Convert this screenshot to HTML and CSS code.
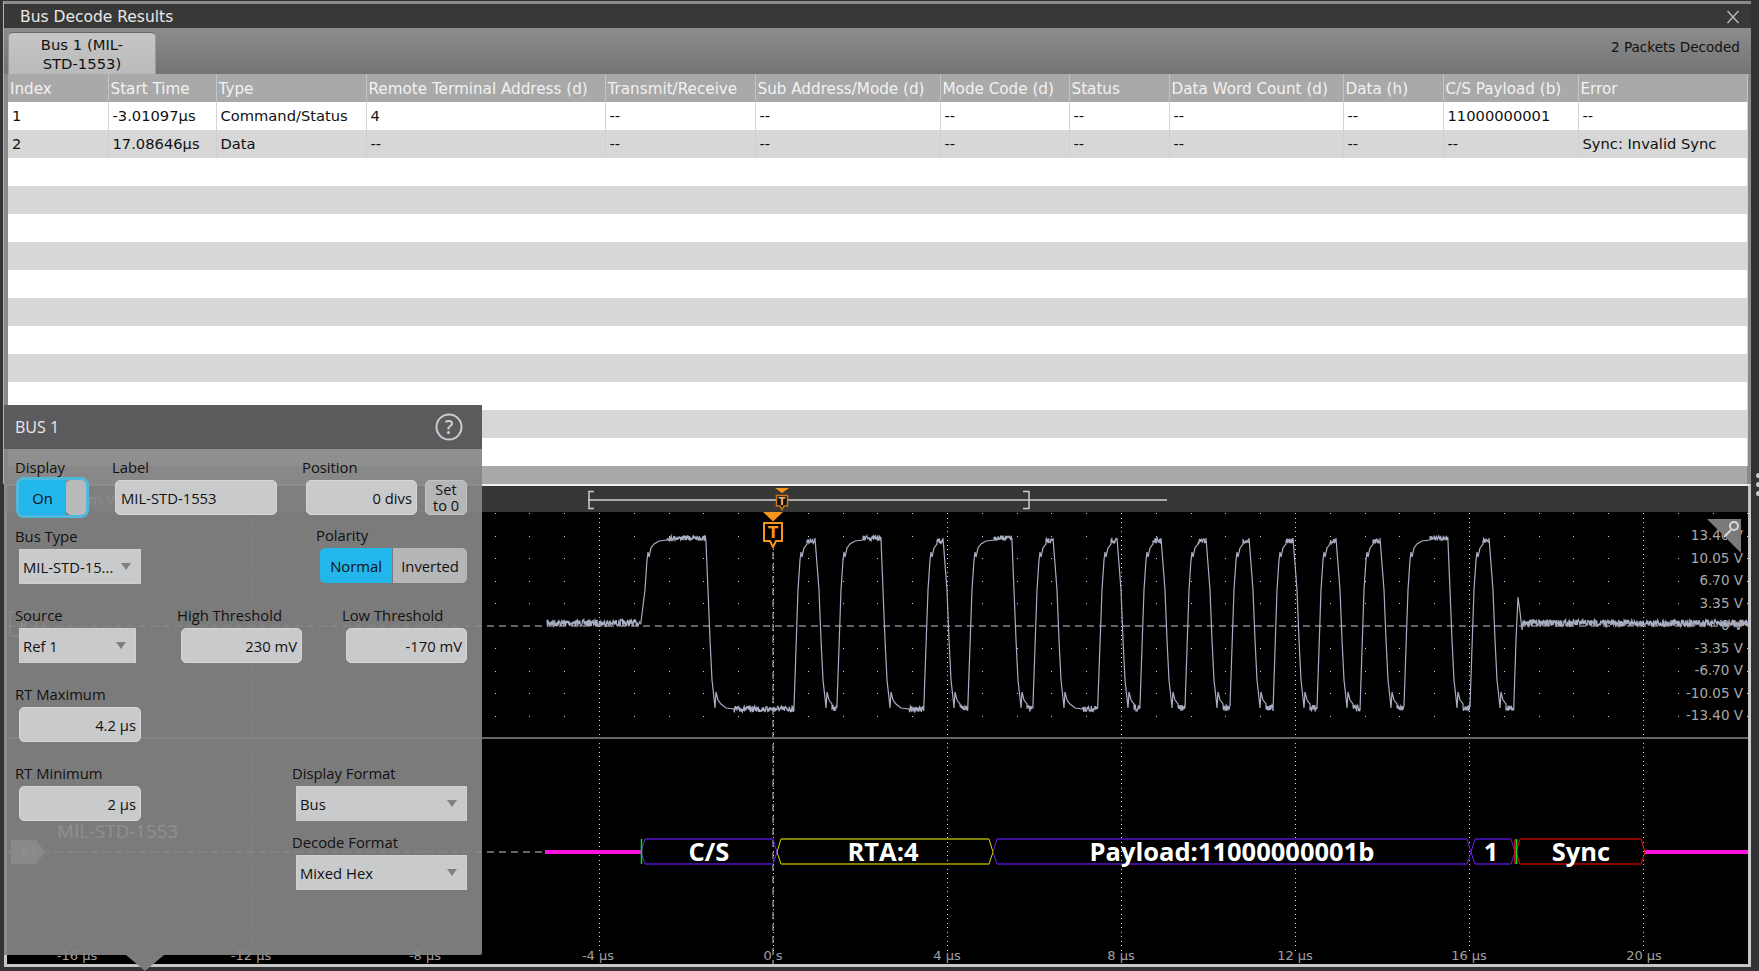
FILE: index.html
```html
<!DOCTYPE html>
<html>
<head>
    <meta charset="utf-8">
    <title>Bus Decode Results</title>
    <link rel="stylesheet" href="styles.css">
</head>
<body>
    <div class="decode-window">
        <div class="title-bar">
            <span>Bus Decode Results</span>
            <svg class="close-icon" width="14" height="14" viewBox="0 0 14 14"><path d="M1.5 1 L12.5 13 M12.5 1 L1.5 13"/></svg>
        </div>
        <div class="tab-bar">
            <div class="tab">Bus 1 (MIL-STD-1553)</div>
            <div class="packet-count">2 Packets Decoded</div>
        </div>
        <table class="results">
            <colgroup>
                <col class="c-index"><col class="c-start"><col class="c-type"><col class="c-rta"><col class="c-tr"><col class="c-sub">
                <col class="c-mode"><col class="c-status"><col class="c-count"><col class="c-data"><col class="c-payload"><col class="c-error">
            </colgroup>
            <thead>
                <tr>
                    <th>Index</th><th>Start Time</th><th>Type</th><th>Remote Terminal Address (d)</th><th>Transmit/Receive</th><th>Sub Address/Mode (d)</th>
                    <th>Mode Code (d)</th><th>Status</th><th>Data Word Count (d)</th><th>Data (h)</th><th>C/S Payload (b)</th><th>Error</th>
                </tr>
            </thead>
            <tbody>
                <tr>
                    <td>1</td><td>-3.01097µs</td><td>Command/Status</td><td>4</td><td>--</td><td>--</td>
                    <td>--</td><td>--</td><td>--</td><td>--</td><td>11000000001</td><td>--</td>
                </tr>
                <tr>
                    <td>2</td><td>17.08646µs</td><td>Data</td><td>--</td><td>--</td><td>--</td>
                    <td>--</td><td>--</td><td>--</td><td>--</td><td>--</td><td>Sync: Invalid Sync</td>
                </tr>
                <tr class="empty"><td colspan="12"></td></tr>
                <tr class="empty"><td colspan="12"></td></tr>
                <tr class="empty"><td colspan="12"></td></tr>
                <tr class="empty"><td colspan="12"></td></tr>
                <tr class="empty"><td colspan="12"></td></tr>
                <tr class="empty"><td colspan="12"></td></tr>
                <tr class="empty"><td colspan="12"></td></tr>
                <tr class="empty"><td colspan="12"></td></tr>
                <tr class="empty"><td colspan="12"></td></tr>
                <tr class="empty"><td colspan="12"></td></tr>
                <tr class="empty"><td colspan="12"></td></tr>
            </tbody>
        </table>
        <div class="scroll-strip"></div>
    </div>

    <div class="scope">
        <svg class="overview" viewBox="7 486 1741 26" width="1741" height="26">
            <text class="view-name" x="30" y="505">Waveform View</text>
            <path class="overview-line" d="M588 500 H1167"/>
            <path class="overview-bracket" d="M594 491.5 H589 V508.5 H594 M1023 491.5 H1029 V508.5 H1023"/>
            <path class="t-fill" d="M775 488 H789 L782 493 Z"/>
            <path class="t-small" d="M776.5 495.5 H787.5 V506 H784 L782 509.5 L780 506 H776.5 Z"/>
            <text class="t-small-letter" x="782" y="505">T</text>
        </svg>
        <svg class="plot" viewBox="7 512 1741 452" width="1741" height="452">
            <path id="grid-dots" class="dots"/>
            <path id="grid-major" class="dots"/>
            <path class="center-line" d="M7 626 H1748"/>
            <path class="center-line" d="M773 552 V964"/>
            <path class="divider" d="M7 738 H1748"/>
            <path id="trace" class="trace"/>

            <g class="level-labels">
                <text x="1743" y="540">13.40 V</text>
                <text x="1743" y="563">10.05 V</text>
                <text x="1743" y="585">6.70 V</text>
                <text x="1743" y="608">3.35 V</text>
                <text x="1743" y="630">0 V</text>
                <text x="1743" y="653">-3.35 V</text>
                <text x="1743" y="675">-6.70 V</text>
                <text x="1743" y="698">-10.05 V</text>
                <text x="1743" y="720">-13.40 V</text>
            </g>
            <path class="zoom-corner" d="M1707 519 H1741 V553 Z"/>
            <circle class="zoom-glass" cx="1734" cy="526" r="4"/>
            <path class="zoom-glass" d="M1731 530 L1724 537"/>

            <path class="t-fill" d="M763 512 H783 L773 521.5 Z"/>
            <path class="t-big" d="M764 523 H782 V541 H776 L773 547 L770 541 H764 Z"/>
            <text class="t-big-letter" x="773" y="538">T</text>

            <path class="center-line" d="M7 852 H545"/>
            <path class="bus-idle" d="M545 852 H641 M1645 852 H1748"/>
            <text class="bus-label" x="57" y="838">MIL-STD-1553</text>
            <path class="bus-tag" d="M11 840 H36 L45 852 L36 864 H11 Z"/>
            <text class="bus-tag-text" x="21" y="856">B1</text>
            <path class="ref-tag" d="M10 612 H36 L45 624 L36 636 H10 Z"/>
            <text class="ref-tag-text" x="20" y="629">R 1</text>

            <g class="bus-seg purple">
                <path class="edge" d="M645 839 L641 852 L645 864 M773 839 L777 852 L773 864"/>
                <path class="flat" d="M645 839 H773 M645 864 H773"/>
            </g>
            <g class="bus-seg olive">
                <path class="edge" d="M781 839 L777 852 L781 864 M989 839 L993 852 L989 864"/>
                <path class="flat" d="M781 839 H989 M781 864 H989"/>
            </g>
            <g class="bus-seg purple">
                <path class="edge" d="M997 839 L993 852 L997 864 M1467 839 L1471 852 L1467 864"/>
                <path class="flat" d="M997 839 H1467 M997 864 H1467"/>
            </g>
            <g class="bus-seg purple">
                <path class="edge" d="M1475 839 L1471 852 L1475 864 M1511 839 L1515 852 L1511 864"/>
                <path class="flat" d="M1475 839 H1511 M1475 864 H1511"/>
            </g>
            <g class="bus-seg red">
                <path class="edge" d="M1520 839 L1516 852 L1520 864 M1641 839 L1645 852 L1641 864"/>
                <path class="flat" d="M1520 839 H1641 M1520 864 H1641"/>
            </g>
            <path class="tick-green" d="M641.5 839 V864 M1516.5 839 V864"/>
            <path class="tick-red" d="M1515 839 V864"/>
            <g class="bus-text">
                <text x="709" y="861">C/S</text>
                <text x="883" y="861">RTA:4</text>
                <text x="1232" y="861">Payload:11000000001b</text>
                <text x="1491" y="861">1</text>
                <text x="1581" y="861">Sync</text>
            </g>

            <g class="time-labels">
                <text x="77" y="960">-16 µs</text>
                <text x="251" y="960">-12 µs</text>
                <text x="425" y="960">-8 µs</text>
                <text x="598" y="960">-4 µs</text>
                <text x="773" y="960">0 s</text>
                <text x="947" y="960">4 µs</text>
                <text x="1121" y="960">8 µs</text>
                <text x="1295" y="960">12 µs</text>
                <text x="1469" y="960">16 µs</text>
                <text x="1644" y="960">20 µs</text>
            </g>
        </svg>
    </div>

    <div class="grip"><span></span><span></span><span></span></div>

    <div class="panel">
        <div class="panel-head">
            <span>BUS 1</span>
            <svg class="help-icon" width="28" height="28" viewBox="0 0 28 28">
                <circle cx="14" cy="14" r="12.5"/>
                <text x="14" y="20.5">?</text>
            </svg>
        </div>
        <div class="panel-body">
            <div class="row">
                <div class="field f-display">
                    <label>Display</label>
                    <div class="toggle"><span class="toggle-on">On</span><span class="toggle-knob"></span></div>
                </div>
                <div class="field f-label">
                    <label>Label</label>
                    <div class="value left w-162">MIL-STD-1553</div>
                </div>
                <div class="field f-position">
                    <label>Position</label>
                    <div class="value w-111">0 divs</div>
                </div>
                <button class="set-zero">Set<br>to 0</button>
            </div>

            <div class="row row-tight">
                <div class="field f-bustype">
                    <label>Bus Type</label>
                    <div class="select w-122">MIL-STD-15...<i class="arrow"></i></div>
                </div>
                <div class="field f-polarity">
                    <label>Polarity</label>
                    <div class="segments">
                        <span class="seg-on">Normal</span><span class="seg-off">Inverted</span>
                    </div>
                </div>
            </div>

            <div class="row">
                <div class="field f-source">
                    <label>Source</label>
                    <div class="select w-117">Ref 1<i class="arrow"></i></div>
                </div>
                <div class="field f-high">
                    <label>High Threshold</label>
                    <div class="value w-121">230 mV</div>
                </div>
                <div class="field">
                    <label>Low Threshold</label>
                    <div class="value w-121">-170 mV</div>
                </div>
            </div>

            <div class="row">
                <div class="field">
                    <label>RT Maximum</label>
                    <div class="value w-122">4.2 µs</div>
                </div>
            </div>

            <div class="row">
                <div class="field f-rtmin">
                    <label>RT Minimum</label>
                    <div class="value w-122">2 µs</div>
                </div>
                <div class="stack">
                    <div class="field">
                        <label>Display Format</label>
                        <div class="select w-171">Bus<i class="arrow"></i></div>
                    </div>
                    <div class="field">
                        <label>Decode Format</label>
                        <div class="select w-171">Mixed Hex<i class="arrow"></i></div>
                    </div>
                </div>
            </div>
        </div>
    </div>

    <script src="script.js"></script>
</body>
</html>
```
FILE: styles.css
```css
* {
    box-sizing: border-box;
}

body {
    margin: 0;
    width: 1759px;
    height: 971px;
    overflow: hidden;
    background: #333;
    font-family: "DejaVu Sans", sans-serif;
    position: relative;
}

/* results window */
.decode-window {
    width: 1748px;
    height: 483px;
    margin: 1px 0 0 3px;
    padding-top: 3px;
    background: #8a8a8a;
    border-left: 1px solid #b4b4b4;
    display: flex;
    flex-direction: column;
}

.title-bar {
    height: 24px;
    flex: none;
    background: #383836;
    color: #e8e8e8;
    font-size: 15.5px;
    padding: 2px 11px 0 16px;
    display: flex;
    align-items: center;
    justify-content: space-between;
}

.close-icon path {
    fill: none;
    stroke: #b4b4b4;
    stroke-width: 1.5;
}

.tab-bar {
    height: 46px;
    flex: none;
    background: linear-gradient(#8c8c8c, #747474);
    display: flex;
    justify-content: space-between;
    align-items: flex-end;
    padding: 0 11px 0 4px;
}

.tab {
    width: 148px;
    height: 42px;
    padding: 2px 20px 0;
    background: linear-gradient(#c6c6c6, #bababa);
    border: 1px solid #9a9a9a;
    border-top-color: #666;
    border-bottom: none;
    border-radius: 5px 5px 0 0;
    color: #111;
    font-size: 14.8px;
    line-height: 19px;
    text-align: center;
}

.packet-count {
    font-size: 13.6px;
    color: #111;
    height: 35px;
}

.results {
    width: 1739px;
    margin-left: 4px;
    border-collapse: collapse;
    table-layout: fixed;
    flex: none;
}

.c-index { width: 100px; }
.c-start { width: 108px; }
.c-type { width: 150px; }
.c-rta { width: 239px; }
.c-tr { width: 150px; }
.c-sub { width: 185px; }
.c-mode { width: 129px; }
.c-status { width: 100px; }
.c-count { width: 174px; }
.c-data { width: 100px; }
.c-payload { width: 135px; }
.c-error { width: 169px; }

.results th {
    height: 28px;
    padding: 2px 2px 0;
    background: #a9a9a9;
    border-right: 1px solid #c4c4c4;
    color: #f2f2f2;
    font-size: 15.2px;
    font-weight: normal;
    text-align: left;
    white-space: nowrap;
    overflow: hidden;
}

.results td {
    height: 28px;
    padding: 0 4px 2px;
    border-right: 1px solid #d4d4d4;
    color: #111;
    font-size: 14.7px;
    white-space: nowrap;
}

.results tbody tr:nth-child(odd) {
    background: #fff;
}

.results tbody tr:nth-child(even) {
    background: #d7d7d7;
}

.results tbody tr:nth-child(even) td {
    border-right-color: #d0d0d0;
}

.scroll-strip {
    height: 18px;
    margin: 0 4px 0 4px;
    background: #a9a9a9;
    flex: none;
}

/* scope view */
.scope {
    width: 1747px;
    height: 483px;
    margin-left: 4px;
    border: 3px solid #c6c6c6;
    border-top: 2px solid #eee;
}

.overview {
    display: block;
    background: #363634;
}

.overview-line {
    stroke: #aaa;
    stroke-width: 2;
    fill: none;
}

.overview-bracket {
    stroke: #ccc;
    stroke-width: 1.5;
    fill: none;
}

.view-name {
    fill: #ddd;
    font-family: "Open Sans", sans-serif;
    font-size: 15px;
}

.t-fill {
    fill: #f7941d;
}

.t-small {
    fill: #111;
    stroke: #c87a1a;
    stroke-width: 1.5;
}

.t-small-letter {
    fill: #e8b070;
    font-size: 10px;
    font-weight: bold;
    text-anchor: middle;
}

.plot {
    display: block;
    background: #000;
}

.dots {
    fill: #d8d8d8;
}

.center-line {
    stroke: #c8c8c8;
    stroke-width: 1;
    stroke-dasharray: 7 5;
    fill: none;
}

.divider {
    stroke: #666;
    stroke-width: 2;
}

.trace {
    fill: none;
    stroke: #a9adc2;
    stroke-width: 1.2;
}

.level-labels text {
    fill: #a8a8a8;
    font-size: 13.5px;
    text-anchor: end;
}

.time-labels text {
    fill: #a0a0a0;
    font-size: 13px;
    text-anchor: middle;
}

.zoom-corner {
    fill: #7a7a7a;
}

.zoom-glass {
    fill: none;
    stroke: #d8d8d8;
    stroke-width: 2;
}

.t-big {
    fill: #000;
    stroke: #f7941d;
    stroke-width: 2;
}

.t-big-letter {
    fill: #f7941d;
    font-size: 15px;
    font-weight: bold;
    text-anchor: middle;
}

.bus-idle {
    stroke: #ff12e0;
    stroke-width: 4;
    fill: none;
}

.bus-label {
    fill: #fff;
    font-family: "Open Sans", sans-serif;
    font-size: 18.8px;
}

.bus-tag {
    fill: #c0a8c8;
}

.bus-tag-text {
    fill: #fff;
    font-size: 12px;
}

.ref-tag {
    fill: none;
    stroke: #ccc;
}

.ref-tag-text {
    fill: #ddd;
    font-size: 12px;
}

.bus-seg path {
    fill: none;
}

.bus-seg .flat {
    stroke-width: 2;
}

.purple .flat { stroke: #3d0f96; }
.purple .edge { stroke: #6a22e6; }
.olive .flat { stroke: #808000; }
.olive .edge { stroke: #d8d800; }
.red .flat { stroke: #8a0000; }
.red .edge { stroke: #f01010; }

.tick-green {
    stroke: #00e020;
    stroke-width: 1.5;
}

.tick-red {
    stroke: #f01010;
    stroke-width: 1.5;
}

.bus-text text {
    fill: #fff;
    font-family: "Open Sans", sans-serif;
    font-size: 25.5px;
    font-weight: bold;
    text-anchor: middle;
}

.grip {
    position: absolute;
    right: -2px;
    top: 473px;
    display: flex;
    flex-direction: column;
    gap: 4px;
}

.grip span {
    display: block;
    width: 5px;
    height: 5px;
    border-radius: 50%;
    background: #ccc;
}

/* config panel, lies over the table and the scope */
.panel {
    position: absolute;
    left: 4px;
    top: 405px;
    width: 478px;
    height: 550px;
    background: rgba(133, 133, 133, 0.92);
    border-radius: 0 2px 2px 0;
    font-family: "Open Sans", sans-serif;
    font-size: 14.8px;
    color: #111;
}

.panel::after {
    content: "";
    position: absolute;
    left: 122px;
    top: 100%;
    border-left: 19px solid transparent;
    border-right: 19px solid transparent;
    border-top: 16px solid #7c7c7c;
}

.panel-head {
    height: 44px;
    background: #5b5b5d;
    color: #e8e8e8;
    font-size: 16px;
    display: flex;
    align-items: center;
    justify-content: space-between;
    padding: 0 19px 0 11px;
}

.help-icon circle {
    fill: none;
    stroke: #ccc;
    stroke-width: 2;
}

.help-icon text {
    fill: #ccc;
    font-size: 19px;
    font-weight: 600;
    text-anchor: middle;
}

.panel-body {
    padding: 7px 15px 0 11px;
}

.row {
    display: flex;
    margin-top: 20px;
}

.row:first-child {
    margin-top: 0;
}

.row-tight {
    margin-top: 10px;
}

.field label {
    display: block;
    height: 20px;
    line-height: 23px;
    margin-bottom: 4px;
    white-space: nowrap;
}

.f-display { width: 97px; }
.f-label { width: 190px; }
.f-position { width: 123px; }
.f-bustype { width: 301px; }
.f-polarity { width: 151px; margin-top: -1px; }
.f-source { width: 162px; }
.f-high { width: 165px; }
.f-rtmin { width: 277px; }

.stack .field + .field {
    margin-top: 10px;
}

.value, .select {
    height: 35px;
    margin-left: 4px;
    background: #c9cacc;
    display: flex;
    align-items: center;
    white-space: nowrap;
}

.value {
    border: 1px solid #d6d6d8;
    border-radius: 5px;
    justify-content: flex-end;
    padding: 0 4px;
}

.value.left {
    justify-content: flex-start;
    margin-left: 3px;
    padding: 0 5px;
}

.select {
    border: 1px solid #d0d0d2;
    justify-content: space-between;
    padding: 0 9px 0 3px;
}

.w-111 { width: 111px; }
.w-117 { width: 117px; }
.w-121 { width: 121px; }
.w-122 { width: 122px; }
.w-162 { width: 162px; }
.w-171 { width: 171px; }

.arrow {
    width: 0;
    height: 0;
    border-left: 5px solid transparent;
    border-right: 5px solid transparent;
    border-top: 7px solid #808082;
}

.toggle {
    width: 73px;
    height: 41px;
    margin: -3px -3px -3px 1px;
    border: 3px solid #4fb8dc;
    border-radius: 8px;
    display: flex;
}

.toggle-on {
    width: 47px;
    background: #22b6ea;
    border-radius: 5px 0 0 5px;
    display: flex;
    align-items: center;
    justify-content: center;
}

.toggle-knob {
    flex: 1;
    background: #b9babc;
    border-radius: 5px;
}

.set-zero {
    width: 42px;
    height: 35px;
    margin-top: 24px;
    padding: 0;
    border: 1px solid #c4c4c6;
    border-radius: 5px;
    background: #b5b6b8;
    color: #111;
    font-family: inherit;
    font-size: 14.5px;
    line-height: 16px;
}

.segments {
    width: 147px;
    height: 35px;
    margin-left: 4px;
    display: flex;
}

.segments span {
    display: flex;
    align-items: center;
    justify-content: center;
}

.seg-on {
    width: 72px;
    background: #22b6ea;
    border-radius: 5px 0 0 5px;
}

.seg-off {
    flex: 1;
    margin-left: 1px;
    background: #b5b6b8;
    border-radius: 0 5px 5px 0;
}
```
FILE: script.js
```js
// grid dots and the captured trace, coordinates are page pixels
var seed = 7;
function rnd() {
    seed = (seed * 16807) % 2147483647;
    return seed / 2147483647;
}

function dotsPath() {
    var rows = [513, 536, 558, 581, 603, 648, 671, 693, 716];
    var d = "";
    rows.forEach(function (y) {
        for (var x = 599 - 34.8 * 17; x < 1748; x += 34.8) {
            d += "M" + Math.round(x) + " " + y + "h1v1h-1z";
        }
    });
    return d;
}

function majorPath() {
    var d = "";
    for (var x = 77; x < 1748; x += 174.05) {
        for (var y = 513; y < 950; y += 4.5) {
            d += "M" + Math.round(x) + " " + Math.round(y) + "h1v1h-1z";
        }
    }
    return d;
}

var HIGH = 538, LOW = 711, BASE = 623;
var rises = [794, 837, 924, 968, 1033, 1098, 1140, 1185, 1230, 1273, 1317, 1360, 1404, 1470];
var falls = [706, 817, 881, 945, 1012, 1055, 1119, 1163, 1208, 1251, 1295, 1338, 1382, 1448, 1491, 1514];

function flat(pts, x0, x1, y, amp) {
    for (var x = x0; x < x1; x += 0.35) {
        pts.push([x, y + (rnd() - 0.5) * amp]);
    }
}

function highTop(pts, x, end) {
    // edge up, small notch, then settle on the high level
    pts.push([x + 4, 590], [x + 6, 560], [x + 7, 552], [x + 8, 557], [x + 10, 548], [x + 13, 544]);
    if (end - x > 30) {
        pts.push([x + 18, 541], [x + 26, 540]);
        flat(pts, x + 26, end, HIGH, 5);
    } else {
        flat(pts, x + 13, end - 2, 541, 5);
        pts.push([end - 2, HIGH]);
    }
}

function lowBottom(pts, x, end) {
    // edge down, small notch, then settle on the low level
    pts.push([x + 2, 590], [x + 4, 640], [x + 6, 680], [x + 8, 698], [x + 9, 708], [x + 10, 692], [x + 12, 700], [x + 15, 704]);
    if (end - x > 30) {
        pts.push([x + 20, 708], [x + 28, 709]);
        flat(pts, x + 28, end, LOW - 2, 6);
    } else {
        flat(pts, x + 15, end, 708, 6);
    }
}

function tracePath() {
    var pts = [];
    flat(pts, 547, 641, BASE, 7);
    highTop(pts, 641, falls[0]);
    for (var i = 0; i < falls.length - 1; i++) {
        lowBottom(pts, falls[i], i < rises.length ? rises[i] : falls[i + 1]);
        if (i < rises.length) {
            highTop(pts, rises[i], falls[i + 1]);
        }
    }
    // last edge, overshoots and drops to the idle level
    pts.push([1516, 640], [1518, 597], [1520, 612], [1522, 630]);
    flat(pts, 1523, 1748, BASE, 7);
    return "M" + pts.map(function (p) {
        return p[0].toFixed(1) + " " + p[1].toFixed(1);
    }).join("L");
}

document.getElementById("grid-dots").setAttribute("d", dotsPath());
document.getElementById("grid-major").setAttribute("d", majorPath());
document.getElementById("trace").setAttribute("d", tracePath());
```
